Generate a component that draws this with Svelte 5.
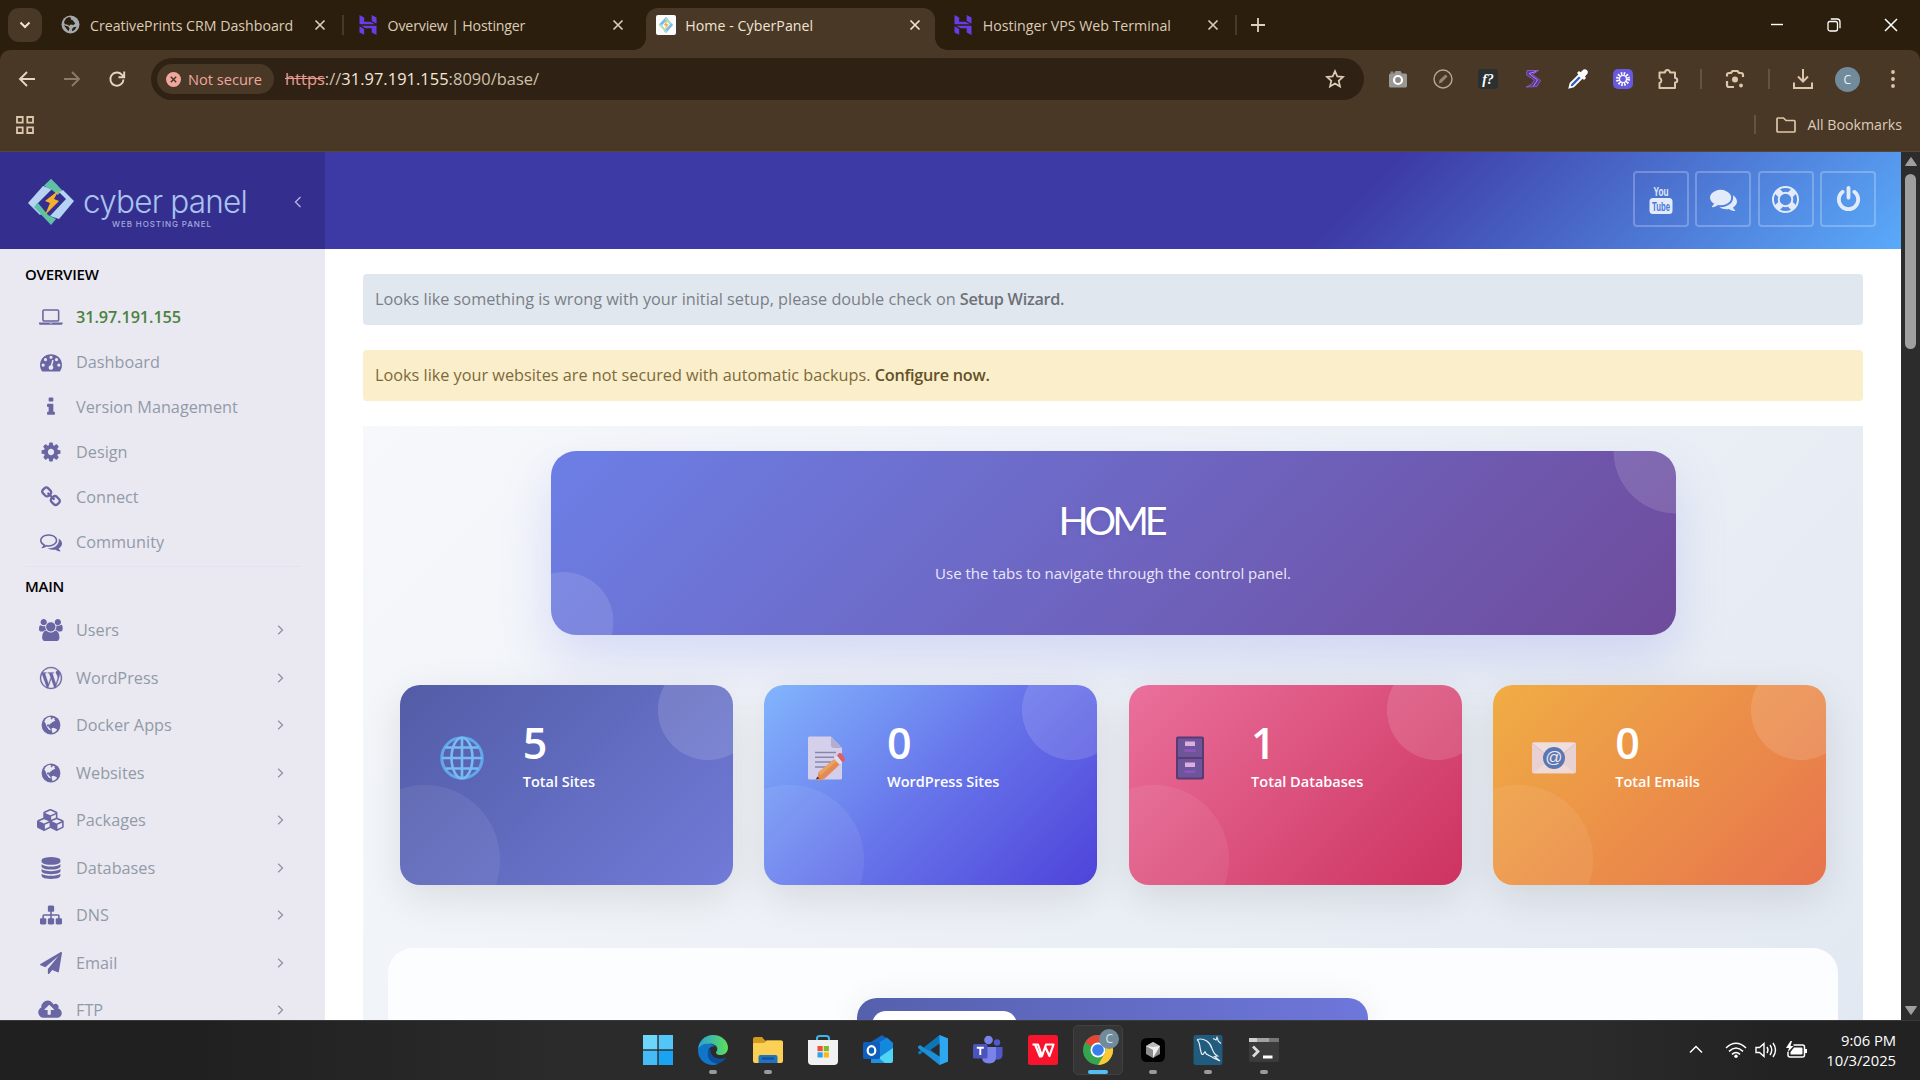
<script>
  const tabs = [
    { title: 'CreativePrints CRM Dashboard', icon: 'earth' },
    { title: 'Overview | Hostinger', icon: 'hostinger' },
    { title: 'Home - CyberPanel', icon: 'cyber', active: true },
    { title: 'Hostinger VPS Web Terminal', icon: 'hostinger' }
  ];

  const fa = {
    laptop: [1920, 'M416 1280q-66 0-113-47t-47-113v-704q0-66 47-113t113-47h1088q66 0 113 47t47 113v704q0 66-47 113t-113 47h-1088zm-32-864v704q0 13 9.5 22.5t22.5 9.5h1088q13 0 22.5-9.5t9.5-22.5v-704q0-13-9.5-22.5t-22.5-9.5h-1088q-13 0-22.5 9.5t-9.5 22.5zm1376 928h160v96q0 40-47 68t-113 28h-1600q-66 0-113-28t-47-68v-96h1760zm-720 96q16 0 16-16t-16-16h-160q-16 0-16 16t16 16h160z'],
    gauge: [1792, 'M384 1152q0-53-37.5-90.5t-90.5-37.5-90.5 37.5-37.5 90.5 37.5 90.5 90.5 37.5 90.5-37.5 37.5-90.5zm192-448q0-53-37.5-90.5t-90.5-37.5-90.5 37.5-37.5 90.5 37.5 90.5 90.5 37.5 90.5-37.5 37.5-90.5zm428 481l101-382q6-26-7.5-48.5t-38.5-29.5-48 6.5-30 39.5l-101 382q-60 5-107 43.5t-63 98.5q-20 77 20 146t117 89 146-20 89-117q16-60-6-117t-72-91zm660-33q0-53-37.5-90.5t-90.5-37.5-90.5 37.5-37.5 90.5 37.5 90.5 90.5 37.5 90.5-37.5 37.5-90.5zm-640-640q0-53-37.5-90.5t-90.5-37.5-90.5 37.5-37.5 90.5 37.5 90.5 90.5 37.5 90.5-37.5 37.5-90.5zm448 192q0-53-37.5-90.5t-90.5-37.5-90.5 37.5-37.5 90.5 37.5 90.5 90.5 37.5 90.5-37.5 37.5-90.5zm320 448q0 261-141 483-19 29-54 29h-1402q-35 0-54-29-141-221-141-483 0-182 71-348t191-286 286-191 348-71 348 71 286 191 191 286 71 348z'],
    info: [1792, 'M1216 1344v128q0 26-19 45t-45 19h-512q-26 0-45-19t-19-45v-128q0-26 19-45t45-19h64v-384h-64q-26 0-45-19t-19-45v-128q0-26 19-45t45-19h384q26 0 45 19t19 45v576h64q26 0 45 19t19 45zm-128-1152v192q0 26-19 45t-45 19h-256q-26 0-45-19t-19-45v-192q0-26 19-45t45-19h256q26 0 45 19t19 45z'],
    cog: [1792, 'M1152 896q0-106-75-181t-181-75-181 75-75 181 75 181 181 75 181-75 75-181zm512-109v222q0 12-8 23t-20 13l-185 28q-19 54-39 91 35 50 107 138 10 12 10 25t-9 23q-27 37-99 108t-94 71q-12 0-26-9l-138-108q-44 23-91 38-16 136-29 186-7 28-36 28h-222q-14 0-24.5-8.5t-11.5-21.5l-28-184q-49-16-90-37l-141 107q-10 9-25 9-14 0-25-11-126-114-165-168-7-10-7-23 0-12 8-23 15-21 51-66.5t54-70.5q-27-50-41-99l-183-27q-13-2-21-12.5t-8-23.5v-222q0-12 8-23t19-13l186-28q14-46 39-92-40-57-107-138-10-12-10-24 0-10 9-23 26-36 98.5-107.5t94.5-71.5q13 0 26 10l138 107q44-23 91-38 16-136 29-186 7-28 36-28h222q14 0 24.5 8.5t11.5 21.5l28 184q49 16 90 37l142-107q9-9 24-9 13 0 25 10 129 119 165 170 7 8 7 22 0 12-8 23-15 21-51 66.5t-54 70.5q26 50 41 98l183 28q13 2 21 12.5t8 23.5z'],
    link: [1792, 'M1520 1216q0-40-28-68l-208-208q-28-28-68-28-42 0-72 32 3 3 19 18.5t21.5 21.5 15 19 13 25.5 3.5 27.5q0 40-28 68t-68 28q-15 0-27.5-3.5t-25.5-13-19-15-21.5-21.5-18.5-19q-33 31-33 73 0 40 28 68l206 207q27 27 68 27 40 0 68-26l147-146q28-28 28-67zm-703-705q0-40-28-68l-206-207q-28-28-68-28-39 0-68 27l-147 146q-28 28-28 67 0 40 28 68l208 208q27 27 68 27 42 0 72-31-3-3-19-18.5t-21.5-21.5-15-19-13-25.5-3.5-27.5q0-40 28-68t68-28q15 0 27.5 3.5t25.5 13 19 15 21.5 21.5 18.5 19q33-31 33-73zm895 705q0 120-85 203l-147 146q-83 83-203 83-121 0-204-85l-206-207q-83-83-83-203 0-123 88-209l-88-88q-86 88-208 88-120 0-204-84l-208-208q-84-84-84-204t85-203l147-146q83-83 203-83 121 0 204 85l206 207q83 83 83 203 0 123-88 209l88 88q86-88 208-88 120 0 204 84l208 208q84 84 84 204z'],
    comments: [1792, 'M1408 768q0 139-94 257t-256.5 186.5-353.5 68.5q-86 0-176-16-124 88-278 128-36 9-86 16h-3q-11 0-20.5-8t-11.5-21q-1-3-1-6.5t.5-6.5 2-6l2.5-5 3.5-5.5 4-5 4.5-5 4-4.5q5-6 23-25t26-29.5 22.5-29 25-38.5 20.5-44q-124-72-195-177t-71-224q0-139 94-257t256.5-186.5 353.5-68.5 353.5 68.5 256.5 186.5 94 257zm384 256q0 120-71 224.5t-195 176.5q10 24 20.5 44t25 38.5 22.5 29 26 29.5 23 25q1 1 4 4.5t4.5 5 4 5 3.5 5.5l2.5 5 2 6 .5 6.5-1 6.5q-3 14-13 22t-22 7q-50-7-86-16-154-40-278-128-90 16-176 16-271 0-472-132 58 4 88 4 161 0 309-45t264-129q125-92 192-212t67-254q0-77-23-152 129 71 204 178t75 230z'],
    commentsOutline: [1792, 'M704 384q-153 0-286 52t-211.5 141-78.5 191q0 82 53 158t149 132l97 56-35 84q34-20 62-39l44-31 53 10q78 14 153 14 153 0 286-52t211.5-141 78.5-191-78.5-191-211.5-141-286-52zm0-128q191 0 353.5 68.5t256.5 186.5 94 257-94 257-256.5 186.5-353.5 68.5q-86 0-176-16-124 88-278 128-36 9-86 16h-3q-11 0-20.5-8t-11.5-21q-1-3-1-6.5t.5-6.5 2-6l2.5-5 3.5-5.5 4-5 4.5-5 4-4.5q5-6 23-25t26-29.5 22.5-29 25-38.5 20.5-44q-124-72-195-177t-71-224q0-139 94-257t256.5-186.5 353.5-68.5zm822 1169q10 24 20.5 44t25 38.5 22.5 29 26 29.5 23 25q1 1 4 4.5t4.5 5 4 5 3.5 5.5l2.5 5 2 6 .5 6.5-1 6.5q-3 14-13 22t-22 7q-50-7-86-16-154-40-278-128-90 16-176 16-271 0-472-132 58 4 88 4 161 0 309-45t264-129q125-92 192-212t67-254q0-77-23-152 129 71 204 178t75 230q0 120-71 224.5t-195 176.5z'],
    users: [1920, 'M593 896q-162 5-265 128h-134q-82 0-138-40.5t-56-118.5q0-353 124-353 6 0 43.5 21t97.5 42.5 119 21.5q67 0 133-23-5 37-5 66 0 159 93 293zm1071 637q0 120-73 189.5t-194 69.5h-874q-121 0-194-69.5t-73-189.5q0-53 3.5-103.5t14-109 26.5-108.5 43-97.5 62-81 85.5-53.5 111.5-20q10 0 43 21.5t73 48 107 48 135 21.5 135-21.5 107-48 73-48 43-21.5q61 0 111.5 20t85.5 53.5 62 81 43 97.5 26.5 108.5 14 109 3.5 103.5zm-1024-1277q0 106-75 181t-181 75-181-75-75-181 75-181 181-75 181 75 75 181zm704 384q0 159-112.5 271.5t-271.5 112.5-271.5-112.5-112.5-271.5 112.5-271.5 271.5-112.5 271.5 112.5 112.5 271.5zm576 225q0 78-56 118.5t-138 40.5h-134q-103-123-265-128 93-134 93-293 0-29-5-66 66 23 133 23 59 0 119-21.5t97.5-42.5 43.5-21q124 0 124 353zm-128-609q0 106-75 181t-181 75-181-75-75-181 75-181 181-75 181 75 75 181z'],
    database: [1792, 'M896 768q237 0 443-43t325-127v170q0 69-103 128t-280 93.5-385 34.5-385-34.5-280-93.5-103-128v-170q119 84 325 127t443 43zm0 768q237 0 443-43t325-127v170q0 69-103 128t-280 93.5-385 34.5-385-34.5-280-93.5-103-128v-170q119 84 325 127t443 43zm0-384q237 0 443-43t325-127v170q0 69-103 128t-280 93.5-385 34.5-385-34.5-280-93.5-103-128v-170q119 84 325 127t443 43zm0-1152q208 0 385 34.5t280 93.5 103 128v128q0 69-103 128t-280 93.5-385 34.5-385-34.5-280-93.5-103-128v-128q0-69 103-128t280-93.5 385-34.5z'],
    sitemap: [1792, 'M1792 1248v320q0 40-28 68t-68 28h-320q-40 0-68-28t-28-68v-320q0-40 28-68t68-28h96v-192h-512v192h96q40 0 68 28t28 68v320q0 40-28 68t-68 28h-320q-40 0-68-28t-28-68v-320q0-40 28-68t68-28h96v-192h-512v192h96q40 0 68 28t28 68v320q0 40-28 68t-68 28h-320q-40 0-68-28t-28-68v-320q0-40 28-68t68-28h96v-192q0-52 38-90t90-38h512v-192h-96q-40 0-68-28t-28-68v-320q0-40 28-68t68-28h320q40 0 68 28t28 68v320q0 40-28 68t-68 28h-96v192h512q52 0 90 38t38 90v192h96q40 0 68 28t28 68z'],
    plane: [1792, 'M1764 11q33 24 27 64l-256 1536q-5 29-32 45-14 8-31 8-11 0-24-5l-453-185-242 295q-18 23-49 23-13 0-22-4-19-7-30.5-23.5t-11.5-36.5v-349l864-1059-1069 925-395-162q-37-14-40-55-2-40 32-59l1664-960q15-9 32-9 20 0 36 11z'],
    cloud: [1920, 'M1216 864q0-14-9-23l-352-352q-9-9-23-9t-23 9l-351 351q-10 12-10 24 0 14 9 23t23 9h224v352q0 13 9.5 22.5t22.5 9.5h192q13 0 22.5-9.5t9.5-22.5v-352h224q13 0 22.5-9.5t9.5-22.5zm640 288q0 159-112.5 271.5t-271.5 112.5h-1088q-185 0-316.5-131.5t-131.5-316.5q0-130 70-240t188-165q-2-30-2-43 0-212 150-362t362-150q156 0 285.5 87t188.5 231q71-62 166-62 106 0 181 75t75 181q0 76-41 138 130 31 213.5 135.5t83.5 238.5z'],
    ring: [1792, 'M896 0q182 0 348 71t286 191 191 286 71 348-71 348-191 286-286 191-348 71-348-71-286-191-191-286-71-348 71-348 191-286 286-191 348-71zm0 128q-190 0-361 90l194 194q82-28 167-28t167 28l194-194q-171-90-361-90zm-678 1129l194-194q-28-82-28-167t28-167l-194-194q-90 171-90 361t90 361zm678 407q190 0 361-90l-194-194q-82 28-167 28t-167-28l-194 194q171 90 361 90zm0-384q159 0 271.5-112.5t112.5-271.5-112.5-271.5-271.5-112.5-271.5 112.5-112.5 271.5 112.5 271.5 271.5 112.5zm484-217l194 194q90-171 90-361t-90-361l-194 194q28 82 28 167t-28 167z'],
    power: [1792, 'M1664 896q0 156-61 298t-164 245-245 164-298 61-298-61-245-164-164-245-61-298q0-182 80.5-343t226.5-270q43-32 95.5-25t83.5 50q32 42 24.5 94.5t-49.5 84.5q-98 74-151.5 181t-53.5 228q0 104 40.5 198.5t109.5 163.5 163.5 109.5 198.5 40.5 198.5-40.5 163.5-109.5 109.5-163.5 40.5-198.5q0-121-53.5-228t-151.5-181q-42-32-49.5-84.5t24.5-94.5q31-43 84-50t95 25q146 109 226.5 270t80.5 343zm-640-768v640q0 52-38 90t-90 38-90-38-38-90v-640q0-52 38-90t90-38 90 38 38 90z'],
    cubes: [2304, 'M640 1632l384-192v-314l-384 164v342zm-64-454l404-173-404-173-404 173zm1088 454l384-192v-314l-384 164v342zm-64-454l404-173-404-173-404 173zm-448-293l384-165v-266l-384 164v267zm-64-379l441-189-441-189-441 189zm1088 518v416q0 36-19 67t-52 47l-448 224q-25 14-57 14t-57-14l-448-224q-4-2-7-4-2 2-7 4l-448 224q-25 14-57 14t-57-14l-448-224q-33-16-52-47t-19-67v-416q0-38 21.5-70t56.5-48l434-186v-400q0-38 21.5-70t56.5-48l448-192q23-10 50-10t50 10l448 192q35 16 56.5 48t21.5 70v400l434 186q36 16 57 48t21 70z']
  };

  const wordpress = 'M21.469 6.825c.84 1.537 1.318 3.3 1.318 5.175 0 3.979-2.156 7.456-5.363 9.325l3.295-9.527c.615-1.54.82-2.771.82-3.864 0-.405-.026-.78-.07-1.11m-7.981.105c.647-.03 1.232-.105 1.232-.105.582-.075.514-.93-.067-.899 0 0-1.755.135-2.88.135-1.064 0-2.85-.15-2.85-.15-.585-.03-.661.855-.075.885 0 0 .54.061 1.125.09l1.68 4.605-2.37 7.08L5.354 6.9c.649-.03 1.234-.1 1.234-.1.585-.075.516-.93-.065-.896 0 0-1.746.138-2.874.138-.2 0-.438-.008-.69-.015C4.911 3.15 8.235 1.215 12 1.215c2.809 0 5.365 1.072 7.286 2.833-.046-.003-.091-.009-.141-.009-1.06 0-1.812.923-1.812 1.914 0 .89.513 1.643 1.06 2.531.411.72.89 1.643.89 2.977 0 .915-.354 1.994-.821 3.479l-1.075 3.585-3.9-11.61.001.014zM12 22.784c-1.059 0-2.081-.153-3.048-.437l3.237-9.406 3.315 9.087c.024.053.05.101.078.149-1.12.393-2.325.609-3.582.609M1.211 12c0-1.564.336-3.05.935-4.39L7.29 21.709C3.694 19.96 1.212 16.271 1.211 12M12 0C5.385 0 0 5.385 0 12s5.385 12 12 12 12-5.385 12-12S18.615 0 12 0';
  const hostinger = 'M16.415 0v7.16l5.785 3.384V2.949L16.415 0ZM1.8 0v11.237h18.815L14.89 8.09l-7.457-.003V3.024L1.8 0Zm14.615 20.894v-5.019l-7.514-.005c.007.033-5.82-3.197-5.82-3.197l19.119.091V24l-5.785-3.106ZM1.8 13.551v7.343l5.633 2.949v-6.988L1.8 13.551Z';

  const overview = [
    ['laptop', '31.97.191.155', true],
    ['gauge', 'Dashboard'],
    ['info', 'Version Management'],
    ['cog', 'Design'],
    ['link', 'Connect'],
    ['commentsOutline', 'Community']
  ];
  const main = [
    ['users', 'Users'],
    ['wordpress', 'WordPress'],
    ['globe', 'Docker Apps'],
    ['globe', 'Websites'],
    ['cubes', 'Packages'],
    ['database', 'Databases'],
    ['sitemap', 'DNS'],
    ['plane', 'Email'],
    ['cloud', 'FTP']
  ];
  const stats = [
    { tone: 'indigo', icon: 'web', value: 5, label: 'Total Sites' },
    { tone: 'blue', icon: 'memo', value: 0, label: 'WordPress Sites' },
    { tone: 'pink', icon: 'cabinet', value: 1, label: 'Total Databases' },
    { tone: 'orange', icon: 'mail', value: 0, label: 'Total Emails' }
  ];
  const apps = [
    ['windows', ''], ['edge', 'dot'], ['files', 'dot'], ['store', ''], ['outlook', ''], ['vscode', ''],
    ['teams', ''], ['wps', ''], ['chrome', 'bar'], ['cursor', 'dot'], ['mysql', 'dot'], ['terminal', 'dot']
  ];
</script>

{#snippet faIcon(name, size)}
  {#if name === 'wordpress'}
    <svg class="fa" height={size} viewBox="0 0 24 24"><path d={wordpress} stroke="currentColor" stroke-width=".3" /></svg>
  {:else if name === 'globe'}
    <svg class="fa" height={size} viewBox="0 0 24 24">
      <circle cx="12" cy="12" r="10.3" />
      <path class="land" d="M8.3 3.9 10.8 3l1.5 1.2-.8 1.4 1.8.2.6-1.6 2.2.4-.4 1.4 1 1-1.7 1.3-1.6.3-1 1.5-1.6.5-.4 1.4-1.4-.8-1.7.9.5 1.6 1.4-.3.5 1.5 1 .2.2 1.5 1.5.2-.6.8-2.1-.5L6.9 13l-1-3.3-1.2-1.2 1-2.4z" />
      <path class="land" d="M12.7 15.500l2.300-.6 1.600.8 1.900 1-.6 1.500-1.900 1.600-2.500 1-.6-2.200z" />
    </svg>
  {:else}
    <svg class="fa" height={size} viewBox="0 0 {fa[name][0]} 1792"><path d={fa[name][1]} /></svg>
  {/if}
{/snippet}

{#snippet cross()}
  <svg width="12" height="12" viewBox="0 0 12 12"><path d="M1.5 1.5l9 9m0-9l-9 9" stroke="currentColor" stroke-width="1.7" fill="none" /></svg>
{/snippet}

{#snippet favicon(name)}
  {#if name === 'earth'}
    <svg width="19" height="19" viewBox="0 0 19 19">
      <circle cx="9.5" cy="9.5" r="9" fill="#a4a9ae" />
      <path d="M5 3.5l3-1.500 2 .7-.3 1.800 1.800.6 2.700 3.400-1.700 1.400-3-.3-1 1.200-2.500-1.200-2.200-.3-.8-2.300zM2.8 10.300l4.500 1.200 1.200 2-1 2.700zM12.5 12.300l3-.6-1.500 2.800-2.500 1.700-.8-1.700z" fill="#2b1e0d" />
    </svg>
  {:else if name === 'hostinger'}
    <svg width="18" height="20" viewBox="1.2 0 21.600 24" fill="#673de6"><path d={hostinger} /></svg>
  {:else}
    <svg width="20" height="20" viewBox="0 0 20 20">
      <rect width="20" height="20" rx="2" fill="#fbfcfb" />
      <path d="M10 2 3 9.500l2 2L12 4z" fill="#78b9e6" /><path d="M10 2l7 7.500-2 1.500-6-6.500z" fill="#a9dcc9" />
      <path d="M10 18l7-8-2-1.500-7 7.500z" fill="#78b9e6" /><path d="M10 18l-7-8 2-1 6 7z" fill="#a9dcc9" />
      <path d="M11.500 5 7.800 10l2.300.5-1.200 4 3.700-5-2.300-.6z" fill="#f2ab35" />
    </svg>
  {/if}
{/snippet}

{#snippet emoji(name)}
  {#if name === 'web'}
    <svg width="44" height="44" viewBox="0 0 44 44" fill="none" stroke="#79c3f7" stroke-width="2.6">
      <circle cx="22" cy="22" r="20.2" stroke="#64adf0" stroke-width="3" /><ellipse cx="22" cy="22" rx="10.5" ry="20.200" />
      <path d="M22 2v40M2 22h40M5.500 11.500h33M5.500 32.500h33" />
    </svg>
  {:else if name === 'memo'}
    <svg width="44" height="44" viewBox="0 0 44 44">
      <path d="M4 2q0-1.500 1.500-1.500H27L38 12v30q0 1.500-1.500 1.500h-31Q4 43.500 4 42z" fill="#ddd4ea" />
      <path d="M27 .500V9q0 3 3 3h8z" fill="#b9afcd" />
      <path d="M11 16.500h21M11 21.300h19M11 26h16M11 31h12" stroke="#8c86a6" stroke-width="1.6" />
      <path d="M14 35 31.500 24.500l5 6L19.500 42l-7.500 1.500z" fill="#ed8b45" transform="rotate(-9 24 34)" />
      <path d="M14 35l17.500-10.500 2 2.500L16 38z" fill="#f5a552" transform="rotate(-9 24 34)" />
      <path d="M30 21.500l3-2 5.500 7-3 2z" fill="#e9e4f3" /><path d="M33 19.500l1.800-2.200q1.800-1 3 .5l3 4.200q1 2-.8 3.200l-1.500 1.300z" fill="#e25c58" />
      <path d="M12 43.500l1.200-3 2.300 2z" fill="#382a36" />
    </svg>
  {:else if name === 'cabinet'}
    <svg width="44" height="44" viewBox="0 0 44 44">
      <rect x="8" y=".5" width="28" height="43" rx="2" fill="#4e3771" />
      <rect x="10" y="2.5" width="24" height="18.5" rx="1" fill="#65549c" /><rect x="10" y="23" width="24" height="18.5" rx="1" fill="#65549c" />
      <path d="M17 5.500h10V10H17zM17 26.500h10V31H17z" fill="#dcb6e8" /><path d="M16.500 13.500h11v2.200h-11zM16.500 34.500h11v2.200h-11z" fill="#8a55c8" />
    </svg>
  {:else}
    <svg width="44" height="44" viewBox="0 0 44 44">
      <rect y="6.5" width="44" height="31" rx="2" fill="#e9d5df" />
      <path d="M1 37 22 21l21 16z" fill="#f2dfe3" /><path d="M0 8 19 23q3 2 6 0L44 8q-.5-1.500-2-1.500H2Q.5 6.500 0 8z" fill="#f1e4ec" />
      <path d="M1 8l18 14.500q3 2 6 0L43 8" fill="none" stroke="#d9bfd0" stroke-width="1" />
      <circle cx="22" cy="22" r="11" fill="#4c74bd" />
      <text x="22" y="27" class="at">@</text>
    </svg>
  {/if}
{/snippet}

{#snippet app(name)}
  <svg width="30" height="30" viewBox="0 0 30 30">
    {#if name === 'windows'}
      <path d="M0 0h14.300v14.300H0z" fill="#6fd6fb" /><path d="M15.700 0H30v14.300H15.700z" fill="#53c5f9" /><path d="M0 15.700h14.300V30H0z" fill="#45bcf7" /><path d="M15.700 15.700H30V30H15.700z" fill="#1ba3f3" />
    {:else if name === 'edge'}
      <defs><linearGradient id="eg" x1="0" x2="1"><stop stop-color="#2a9fdf" /><stop offset="1" stop-color="#5ddf57" /></linearGradient></defs>
      <path d="M0 15.500C0 6.500 6.500 0 15 0c9 0 15 6.300 15 12.500 0 5-3.500 7.500-7.500 7.500-3.800 0-4.500-1.800-4.500-2.500 0-1 1.300-1.200 1.300-3.500 0-3-3-5.300-7-5.300C6 8.700 1 11.500 0 15.500z" fill="url(#eg)" />
      <path d="M0 15.500C1 10.500 6 8.700 10.500 8.700c3.500 0 6 1.500 7.500 3-5-1.500-8 2.300-8 6.300 0 6 5 10.800 10.500 10.500-1.500 1-4 1.500-5.500 1.500C6 30 0 23.500 0 15.500z" fill="#1276c8" />
      <path d="M10.500 15c-3 8 3 14 10.500 13.300 3.500-1.200 6.500-4 7.300-6-8 4-16.500-.300-15.800-8z" fill="#0b4fa0" />
    {:else if name === 'files'}
      <path d="M0 4q0-2 2-2h7l3 3.500h16q2 0 2 2V12H0z" fill="#d29a1e" /><path d="M0 9q0-1 1-1h10l3-2.500h14q2 0 2 2V26q0 2-2 2H2q-2 0-2-2z" fill="#fbd155" />
      <path d="M5.500 28v-6q0-2 2-2h15q2 0 2 2v6z" fill="#2273bf" /><path d="M9 23.500h12" stroke="#114f91" stroke-width="2" />
    {:else if name === 'store'}
      <path d="M9 7V3.500Q9 1 11.500 1h7Q21 1 21 3.500V7" fill="none" stroke="#3cb5e6" stroke-width="2" /><path d="M0 5h30v21q0 4-4 4H4q-4 0-4-4z" fill="#f1f1f3" />
      <path d="M9.500 11h5.200v5.200H9.500z" fill="#ee5130" /><path d="M15.700 11h5.200v5.200h-5.200z" fill="#7fbb25" /><path d="M9.500 17.300h5.200v5.200H9.500z" fill="#2ba3ea" /><path d="M15.700 17.300h5.200v5.200h-5.200z" fill="#fbb818" />
    {:else if name === 'outlook'}
      <path d="M8 7 19 0l11 8v14l-8 6H8z" fill="#1164c0" /><path d="M12 10 24 2.500 30 8v8L16 22z" fill="#1488dc" /><path d="M8 28 30 13v13q0 2-2 2z" fill="#4fd5f5" /><path d="M8 17l14 11H8z" fill="#1f8fe0" />
      <rect y="7" width="17" height="17" rx="1.5" fill="#0d5ebd" /><ellipse cx="8.5" cy="15.5" rx="3.8" ry="4.4" fill="none" stroke="#fff" stroke-width="2.2" />
    {:else if name === 'vscode'}
      <path d="M21.500 0 30 3.500v23L21.500 30 6 16l-4 3.500L0 18.500V17z" fill="#0d75b8" /><path d="M21.500 30 0 13v-1.500L2 10l5 3.500 14.500 7.800z" fill="#1d8fd6" /><path d="M21.500 0 30 3.500v23L21.500 30z" fill="#2fa7ee" /><path d="M21.500 8.500v13L12.500 15z" fill="#2b2b2b" />
    {:else if name === 'teams'}
      <circle cx="24" cy="7.5" r="3.2" fill="#5059c9" /><circle cx="15.5" cy="5" r="4.3" fill="#7b83eb" /><path d="M21 12h8.500v7.500q0 5-5 5H21z" fill="#5059c9" /><path d="M9 12h14v10q0 6.500-7 6.500T9 22z" fill="#7b83eb" />
      <rect y="9" width="14.5" height="14.5" rx="1.5" fill="#4b53bc" /><path d="M3.800 12.800h7M7.300 12.800V20" stroke="#fff" stroke-width="1.9" />
    {:else if name === 'wps'}
      <rect width="30" height="30" rx="2.5" fill="#f8142d" /><path d="M4.500 9.500h5.500l4 11.500L18 9.500h7.500L21.500 21 17.500 12.500M7 9.500l5 12h2" fill="none" stroke="#fff" stroke-width="2.2" stroke-linejoin="round" />
    {:else if name === 'chrome'}
      <circle cx="15" cy="15" r="15" fill="#35a550" /><path d="M15 0a15 15 0 0 1 13 7.500H15A7.500 7.500 0 0 0 8.500 11.300L2 7.500A15 15 0 0 1 15 0z" fill="#e94434" /><path d="M28 7.500A15 15 0 0 1 15 30l6.500-11.300A7.500 7.500 0 0 0 20.500 9.500L19 7.500z" fill="#fcc934" />
      <circle cx="15" cy="15" r="7.5" fill="#fff" /><circle cx="15" cy="15" r="5.8" fill="#3a7ded" />
    {:else if name === 'cursor'}
      <rect x="3" y="3" width="24" height="24" rx="5.5" fill="#020202" /><path d="M15 7l7 4v8l-7 4-7-4v-8z" fill="#8d8d8d" /><path d="M8 11h14l-7 12v-8z" fill="#f0f0f0" /><path d="M8 11l7-4 7 4-7 1z" fill="#bbb" />
    {:else if name === 'mysql'}
      <rect x=".5" width="29" height="30" rx="2.5" fill="#215b7d" /><path d="M4 4.500c7-2 13 2.500 15 9 1.500 4.500 3.500 6.500 5.500 7.500l-3 .5 5.500 4.500-6.500-3C18 21 16 21 14.500 19.500c-.5 0-2-1.500-2.500-3M4 4.500c3 2 2.500 7 3.500 10.500 1 4 1 4.500 2.500 4.500l2-3M20 3.500l3 1.500 1-2.500 1.500 4 2.500 2" fill="none" stroke="#e6eef2" stroke-width="1.2" />
    {:else}
      <rect y="3" width="30" height="24" rx="1.5" fill="#3b3b3b" /><path d="M0 3h8v4H0z" fill="#d0d0d0" /><path d="M8 3h12v4H8z" fill="#a2a2a2" /><path d="M20 3h10v4H20z" fill="#767676" /><path d="M4 11.500l5 5-5 5" fill="none" stroke="#dcdcdc" stroke-width="2.8" /><path d="M14 22h9.500" stroke="#fff" stroke-width="3" />
    {/if}
  </svg>
{/snippet}

<div class="screen">
  <header class="browser">
    <div class="tabstrip">
      <div class="tabsearch">
        <svg width="12" height="8" viewBox="0 0 12 8"><path d="M1.5 1.5 6 6l4.500-4.500" fill="none" stroke="#f2e5d4" stroke-width="2" /></svg>
      </div>
      {#each tabs as tab, i}
        <div class="tab" class:active={tab.active} class:ruled={i === 0 || i === 3}>
          <span class="fav">{@render favicon(tab.icon)}</span>
          <span class="title t{i}">{tab.title}</span>
          <span class="close">{@render cross()}</span>
        </div>
      {/each}
      <svg class="plus" width="14" height="14" viewBox="0 0 14 14"><path d="M7 0v14M0 7h14" stroke="#e0cfb9" stroke-width="1.8" /></svg>
      <div class="winctl">
        <svg width="14" height="14" viewBox="0 0 14 14"><path d="M1 6.500h12" stroke="#fff" stroke-width="1.4" /></svg>
        <svg width="14" height="14" viewBox="0 0 14 14" fill="none" stroke="#fff" stroke-width="1.3"><rect x="1" y="3.5" width="9.5" height="9.5" rx="2" /><path d="M3.800 1h6.200q3 0 3 3v6.200" /></svg>
        <svg width="14" height="14" viewBox="0 0 14 14"><path d="M1 1l12 12M13 1 1 13" stroke="#fff" stroke-width="1.5" /></svg>
      </div>
    </div>

    <div class="toolbar">
      <div class="nav">
        <svg width="18" height="18" viewBox="0 0 18 18"><path d="M17 9H2.500M9 2 2 9l7 7" fill="none" stroke="#e5d5c1" stroke-width="1.9" /></svg>
        <svg width="18" height="18" viewBox="0 0 18 18"><path d="M1 9h14.500M9 2l7 7-7 7" fill="none" stroke="#8b7a66" stroke-width="1.9" /></svg>
        <svg width="18" height="18" viewBox="0 0 18 18"><path d="M15.500 9.500A6.600 6.600 0 1 1 13.800 4.700L16 6.800M16.200 1.500v5.700h-5.700" fill="none" stroke="#e5d5c1" stroke-width="1.9" /></svg>
      </div>
      <div class="omnibox">
        <div class="chip">
          <svg width="15" height="15" viewBox="0 0 15 15"><circle cx="7.5" cy="7.5" r="7.5" fill="#efa79e" /><path d="M4.800 4.800l5.400 5.400m0-5.400-5.400 5.400" stroke="#493826" stroke-width="1.5" /></svg>
          <span>Not secure</span>
        </div>
        <div class="url"><s>https</s><span class="dim">://</span>31.97.191.155<span class="dim">:8090/base/</span></div>
        <svg width="20" height="20" viewBox="0 0 20 20"><path d="M10 2.200l2.300 5.200 5.700.6-4.300 3.800 1.300 5.600-5-3-5 3 1.300-5.600L2 8l5.700-.6z" fill="none" stroke="#ddccb7" stroke-width="1.7" /></svg>
      </div>
      <div class="extensions">
        <svg width="20" height="20" viewBox="0 0 20 20"><path d="M1 6q0-1.500 1.500-1.500H6L7.500 2h5L14 4.500h3.500Q19 4.500 19 6v11q0 1.500-1.500 1.500h-15Q1 18.500 1 17z" fill="#9a9895" /><path d="M2.500 2.500h3V5h-3z" fill="#8b8884" /><circle cx="10" cy="11" r="4" fill="#8b8986" stroke="#fff" stroke-width="2.2" /></svg>
        <svg width="20" height="20" viewBox="0 0 20 20"><circle cx="10" cy="10" r="9" fill="none" stroke="#b7a897" stroke-width="1.4" /><path d="M6 14.500 6.500 11l6-5.500 2 2-5.800 6z" fill="#948676" /></svg>
        <svg width="20" height="20" viewBox="0 0 20 20"><rect width="20" height="20" rx="3" fill="#2d3031" /><text x="10" y="15" class="fq">f?</text></svg>
        <svg width="20" height="20" viewBox="0 0 20 20"><path d="M15.500 1.500H4L3.500 6l8 5-3 4.500-5.500 2.500 11-.5 3.500-6-8-6z" fill="#5a3596" stroke="#8757c6" stroke-width="1" /><path d="M13 2.500 6 4.500l8.500 6.500L10.500 17" fill="none" stroke="#b695e4" stroke-width=".9" /></svg>
        <svg width="20" height="20" viewBox="0 0 20 20"><path d="M1.500 18.500l1-4L11 6l3 3-8.500 8.500z" fill="#315cc0" stroke="#fff" stroke-width="1.8" /><path d="M9 4l2-2 1.500 1.200L15.500.500q2-.8 3.500.8t.6 3.200L17 7.500 18 9l-2 2z" fill="#fff" /></svg>
        <svg width="20" height="20" viewBox="0 0 20 20"><rect width="20" height="20" rx="5" fill="#675ade" /><circle cx="10" cy="10" r="5" fill="none" stroke="#fff" stroke-width="4" stroke-dasharray="1.400 1.218" /><circle cx="10" cy="10" r="3.5" fill="none" stroke="#fff" stroke-width="1.2" /></svg>
        <svg width="22" height="22" viewBox="0 0 22 22"><path d="M2.500 4.500H8a2.500 2.500 0 0 1 5 0h5V10a2.200 2.200 0 0 1 0 4.500V20H2.500v-5a2.600 2.600 0 0 0 0-5z" fill="none" stroke="#ddc6ab" stroke-width="2" stroke-linejoin="round" /></svg>
        <i class="bar"></i>
        <svg width="20" height="20" viewBox="0 0 20 20" fill="none" stroke="#ddc6ab" stroke-width="2.2"><path d="M2 7.500V6q0-2 2-2h2l1.500-2h5L14 4h2q2 0 2 2v2M2 12v4q0 2 2 2h5" /><circle cx="10" cy="10.5" r="3" fill="#ddc6ab" stroke="none" /><circle cx="16" cy="16.5" r="1.9" fill="#ddc6ab" stroke="none" /></svg>
        <i class="bar"></i>
        <svg width="22" height="22" viewBox="0 0 22 22"><path d="M11 1v12M6 8.500l5 5 5-5M2 14.500V20h18v-5.500" fill="none" stroke="#ddc6ab" stroke-width="2" /></svg>
        <span class="avatar">C</span>
        <svg width="6" height="20" viewBox="0 0 6 20" fill="#ddc6ab"><circle cx="3" cy="3" r="1.9" /><circle cx="3" cy="10" r="1.9" /><circle cx="3" cy="17" r="1.9" /></svg>
      </div>
    </div>

    <div class="bookmarks">
      <svg width="18" height="18" viewBox="0 0 18 18" fill="none" stroke="#ddc6ab" stroke-width="1.8"><path d="M1 1h5.700v5.700H1zM11.300 1H17v5.700h-5.700zM1 11.300h5.700V17H1zM11.300 11.300H17V17h-5.700z" /></svg>
      <i class="bar"></i>
      <svg width="20" height="16" viewBox="0 0 20 16"><path d="M1 2q0-1 1-1h5.500L10 3.500h8q1 0 1 1V14q0 1-1 1H2q-1 0-1-1z" fill="none" stroke="#ddc6ab" stroke-width="1.7" /></svg>
      <span>All Bookmarks</span>
    </div>
  </header>

  <div class="page">
    <aside class="sidebar">
      <div class="brand">
        <svg width="46" height="46" viewBox="0 0 46 46">
          <path d="M0 24 15 7l9 3L8 26l7 8-3 2z" fill="#b7d3f3" /><path d="M23 0l7 7-8 3.500-6-4z" fill="#5fc1a4" /><path d="M23 0 34 11l-4 5-12-10z" fill="#5fc1a4" />
          <path d="M46 22 31 40l-9-3 16-17-7-7 4-2z" fill="#b7d3f3" /><path d="M23 46 6 28l4-4 10 12 8 4z" fill="#5fc1a4" />
          <path d="M31 11 17 22l5 2-5 12 14-14-5-2z" fill="#f7b02c" />
        </svg>
        <div class="wordmark"><b>cyber panel</b><small>WEB HOSTING PANEL</small></div>
        <svg class="fold" width="8" height="12" viewBox="0 0 8 12"><path d="M6.500 1 1.500 6l5 5" fill="none" stroke="#b5b3dd" stroke-width="1.4" /></svg>
      </div>
      <h2>OVERVIEW</h2>
      <nav class="short">
        {#each overview as [icon, label, strong]}
          <a class:strong><span class="ico">{@render faIcon(icon, 22)}</span>{label}</a>
        {/each}
      </nav>
      <hr />
      <h2 class="second">MAIN</h2>
      <nav class="tall">
        {#each main as [icon, label]}
          <a><span class="ico">{@render faIcon(icon, 22)}</span>{label}
            <svg class="more" width="7" height="10" viewBox="0 0 7 10"><path d="M1.200.8 5.500 5 1.200 9.200" fill="none" stroke="#8d94a6" stroke-width="1.3" /></svg>
          </a>
        {/each}
      </nav>
    </aside>

    <main>
      <div class="topbar">
        <button aria-label="YouTube">
          <svg width="24" height="30" viewBox="0 0 24 30"><text x="12" y="11" class="you" textLength="15" lengthAdjust="spacingAndGlyphs">You</text><rect x=".5" y="13" width="23" height="16" rx="3.5" fill="#e3ebfb" /><text x="12" y="26" class="tube" textLength="18" lengthAdjust="spacingAndGlyphs">Tube</text></svg>
        </button>
        <button aria-label="Community chat">{@render faIcon('comments', 27)}</button>
        <button aria-label="Support">{@render faIcon('ring', 27)}</button>
        <button aria-label="Log out">{@render faIcon('power', 27)}</button>
      </div>

      <div class="alert info">Looks like something is wrong with your initial setup, please double check on <b>Setup Wizard.</b></div>
      <div class="alert warn">Looks like your websites are not secured with automatic backups. <b>Configure now.</b></div>

      <section class="panel">
        <div class="hero">
          <h1>HOME</h1>
          <p>Use the tabs to navigate through the control panel.</p>
        </div>
        <div class="stats">
          {#each stats as s}
            <div class="card {s.tone}">
              <span class="pic">{@render emoji(s.icon)}</span>
              <div class="figure"><strong>{s.value}</strong><span>{s.label}</span></div>
            </div>
          {/each}
        </div>
        <div class="sheet">
          <div class="switch"><div class="knob"></div></div>
        </div>
      </section>
    </main>

    <div class="scrollbar">
      <svg width="12" height="9" viewBox="0 0 12 9"><path d="M6 .500 11.500 8.500H.500z" fill="#9f9f9f" stroke="#9f9f9f" stroke-linejoin="round" /></svg>
      <div class="thumb"></div>
      <svg width="12" height="9" viewBox="0 0 12 9"><path d="M6 8.500 11.500.500H.500z" fill="#9f9f9f" stroke="#9f9f9f" stroke-linejoin="round" /></svg>
    </div>
  </div>

  <footer class="taskbar">
    <div class="apps">
      {#each apps as [name, state]}
        <div class="app {name} {state}">
          {@render app(name)}
          {#if name === 'chrome'}<span class="badge">C</span>{/if}
          <i></i>
        </div>
      {/each}
    </div>
    <div class="tray">
      <svg width="14" height="9" viewBox="0 0 14 9"><path d="M1 7.500l6-6 6 6" fill="none" stroke="#fff" stroke-width="1.5" /></svg>
      <svg width="22" height="18" viewBox="0 0 22 18" fill="none" stroke="#fff" stroke-width="1.6"><path d="M1 7q10-9.500 20 0M4 10.300q7-6.600 14 0M7 13.300q4-3.600 8 0" /><circle cx="11" cy="15.2" r="1.7" fill="#fff" stroke="none" /></svg>
      <svg width="22" height="18" viewBox="0 0 22 18" fill="none" stroke="#fff" stroke-width="1.4"><path d="M1 6.500h3.500L9 2.500v13l-4.500-4H1zM12 6q2 3 0 6M15 4q3.500 5 0 10M18 2q5 7 0 14" /></svg>
      <svg width="22" height="18" viewBox="0 0 22 18"><path d="M7.500 4h9q2 0 2 2v8q0 2-2 2H4q-2 0-2-2v-3" fill="none" stroke="#fff" stroke-width="1.5" /><path d="M8 6.500h7.500q1 0 1 1v5q0 1-1 1H4.500V11zM19 8h2v4h-2zM4.500 0 0 7h3l-1.500 4.500L7.500 5h-3L6 0z" fill="#fff" /></svg>
      <div class="clock"><span>9:06 PM</span><span>10/3/2025</span></div>
    </div>
  </footer>
</div>

<style>
  :global(body) { margin: 0; background: #202020; overflow: hidden; }
  .screen { width: 1920px; height: 1080px; display: flex; flex-direction: column; font-family: 'Open Sans', 'Noto Sans', sans-serif; overflow: hidden; }
  .screen :global(svg) { flex: none; display: block; overflow: visible; }
  .screen * { box-sizing: border-box; }

  /* Browser chrome */
  .browser { height: 152px; flex: none; background: #2b1e0d; color: #dccbb6; display: flex; flex-direction: column; }
  .tabstrip { height: 50px; display: flex; align-items: flex-start; padding: 8px 0 0 8px; }
  .tabsearch { width: 34px; height: 34px; border-radius: 11px; background: #493826; display: grid; place-items: center; margin-right: 9px; }
  .tab { position: relative; width: 289px; height: 42px; margin-right: 8.6px; display: flex; align-items: center; padding: 0 14px 9px 10px; font-size: 14.2px; border-radius: 12px 12px 0 0; }
  .tab .fav { width: 20px; height: 34px; margin-right: 9px; display: grid; align-items: center; }
  .tab .title { flex: 1; white-space: nowrap; padding-top: 2px; }
  .tab.active { background: #493826; color: #f1e4d3; }
  .tab.active::before, .tab.active::after { content: ''; position: absolute; bottom: 0; width: 12px; height: 12px; }
  .tab.active::before { right: 100%; background: radial-gradient(circle at 0 0, transparent 11.5px, #493826 12px); }
  .tab.active::after { left: 100%; background: radial-gradient(circle at 100% 0, transparent 11.5px, #493826 12px); }
  .tab.ruled::after { content: ''; position: absolute; right: -4px; top: 7px; width: 2px; height: 20px; background: #493826; }
  .t0 { letter-spacing: -.02px; }
  .t1 { letter-spacing: -.18px; }
  .t2 { letter-spacing: .05px; }
  .t3 { letter-spacing: -.02px; }
  .plus { margin: 10px 0 0 9.5px; }
  .winctl { margin: 10px 22px 0 auto; display: flex; gap: 43px; }

  .toolbar { height: 58px; background: #493826; border-radius: 10px 10px 0 0; display: flex; align-items: center; }
  .nav { display: flex; gap: 27px; padding-left: 18px; width: 151px; }
  .omnibox { width: 1213px; height: 42px; border-radius: 21px; background: #2f2214; display: flex; align-items: center; padding: 0 19px 0 6px; }
  .chip { height: 30px; width: 117px; border-radius: 15px; background: #493826; color: #efa79e; font-size: 14.6px; display: flex; align-items: center; gap: 7px; padding-left: 9px; font-weight: 500; white-space: nowrap; }
  .chip span { margin-top: -1px; }
  .url { flex: 1; padding-left: 11px; font-size: 16.4px; color: #f4e8d9; letter-spacing: .05px; padding-bottom: 2px; }
  .url s { color: #e89c92; }
  .url .dim { color: #d2c1ab; }
  .extensions { flex: 1; display: grid; grid-template-columns: repeat(7, 45.1px) 19.7px 49px 19px 49px 40px 51px; margin-left: 11px; align-items: center; justify-items: center; }
  .bar { width: 2px; height: 20px; background: #66533e; }
  .avatar { width: 25px; height: 25px; border-radius: 50%; background: #718b9b; color: #eef2f4; font-size: 12px; display: grid; place-items: center; }
  .fq { font: italic 700 14px 'Liberation Serif', serif; fill: #fff; text-anchor: middle; }
  .bookmarks { height: 44px; background: #493826; border-bottom: 1px solid #55483b; display: flex; align-items: center; padding: 0 18px 10px 16px; }
  .bookmarks .bar { margin-left: auto; margin-right: 20px; height: 19px; }
  .bookmarks span { font-size: 14.2px; margin-left: 11px; color: #ddccb7; }

  /* Page */
  .page { height: 868px; display: flex; background: #fff; overflow: hidden; }
  .sidebar { position: relative; z-index: 1; width: 325px; flex: none; background: #eae9f1; overflow: hidden; }
  .brand { height: 97px; background: #342f8f; display: flex; align-items: center; padding: 3px 23px 0 28px; }
  .wordmark { display: flex; flex-direction: column; margin-left: 9px; width: 190px; }
  .wordmark b { font: 300 31.5px/34px Inter, 'Liberation Sans', sans-serif; color: #a9c2ee; letter-spacing: -.8px; margin-top: 9px; }
  .wordmark small { font: 500 8px/8px Inter, sans-serif; color: #a3a9dd; letter-spacing: .9px; margin: 1px 0 0 29px; }
  .fold { margin-left: auto; }
  h2 { margin: 0; font-size: 15px; font-weight: 600; line-height: 20px; color: #000; padding: 15px 0 0 25px; letter-spacing: -.25px; }
  nav a { display: flex; align-items: center; color: #929aa8; font-size: 16.25px; padding-left: 31px; padding-right: 41.5px; }
  .short { padding-top: 10px; }
  .short a { height: 45px; }
  .tall a { height: 47.5px; }
  .short .strong { color: #4a8340; font-weight: 600; letter-spacing: -.1px; }
  .ico { width: 40px; margin-right: 5px; display: grid; place-items: center; }
  .fa { fill: currentColor; }
  .ico .fa { color: #6a66a3; }
  .land { fill: #eae9f1; }
  .more { margin-left: auto; }
  hr { margin: 2px 24px 0 25px; border: 0; height: 1px; background: #e2e3ee; }
  h2.second { padding-top: 9px; padding-bottom: 10.4px; }

  main { flex: 1; min-width: 0; }
  .topbar { height: 97px; background: linear-gradient(135deg, #3d39a5 70%, #5aaafa 100%); margin-left: -325px; padding: 18.6px 24.6px 0 0; display: flex; justify-content: flex-end; gap: 6.25px; }
  .topbar button { width: 56.25px; height: 56.25px; border: 2px solid rgba(255, 255, 255, .24); border-radius: 4px; background: none; display: grid; place-items: center; color: #e3ebfb; padding: 2px 0 0; }
  .you, .tube { font: 700 13px 'Liberation Sans', sans-serif; text-anchor: middle; }
  .you { fill: #e3ebfb; }
  .tube { fill: #4a79d8; }

  .alert { margin: 25px 38px 0 37.5px; height: 51px; border-radius: 4px; line-height: 51px; padding-left: 12.5px; font-size: 16.25px; white-space: nowrap; }
  .alert b { font-weight: 600; letter-spacing: -.28px; }
  .alert.info { background: #e0e7ef; color: #7b7f86; }
  .alert.info b { color: #6d7177; }
  .alert.warn { background: #faeecb; color: #7d6a3a; }
  .alert.warn b { color: #655128; }

  .panel { margin: 25px 38px 0 37.5px; height: 600px; padding-top: 25px; background: linear-gradient(135deg, #f6f8fb, #c3cfe2) 0 0 / 100% 4000px; display: flex; flex-direction: column; align-items: center; }
  .hero { position: relative; width: 1125px; height: 184px; flex: none; border-radius: 25px; background: linear-gradient(135deg, #6c7fe6, #6f4b9b); box-shadow: 0 25px 50px rgba(130, 136, 240, .24); text-align: center; color: #fff; margin-left: .6px; }
  .hero::before { content: ''; position: absolute; inset: 0; border-radius: 25px; background: radial-gradient(circle at 100% 0, rgba(255, 255, 255, .13) 62px, transparent 62.8px), radial-gradient(circle at 12.5px 171px, rgba(255, 255, 255, .12) 49.5px, transparent 50.3px); }
  h1 { margin: 0; padding-top: 41px; font: 400 39.5px/56px Lato, sans-serif; letter-spacing: -4px; text-indent: -4px; text-shadow: 0 2px 5px rgba(0, 0, 0, .08); }
  .hero p { margin: 13px 0 0; font-size: 15px; line-height: 24px; color: #ebe7f8; }
  .stats { width: 1425.5px; margin: 50px 0 0 .6px; display: grid; grid-template-columns: repeat(4, 333px); justify-content: space-between; flex: none; }
  .card { position: relative; height: 200px; border-radius: 20px; color: #fff; display: flex; padding: 37px 0 0 39.5px; box-shadow: 0 12px 40px rgba(0, 0, 0, .1); }
  .card::before { content: ''; position: absolute; inset: 0; border-radius: 20px; background: radial-gradient(circle at 308px 25px, rgba(255, 255, 255, .13) 49.6px, transparent 50.4px), radial-gradient(circle at 25px 175px, rgba(255, 255, 255, .07) 74.6px, transparent 75.4px); }
  .indigo { background: linear-gradient(135deg, #525ca6, #717bd8); }
  .blue { background: linear-gradient(135deg, #82b5fd, #6775ea 50%, #4e43da); }
  .pink { background: linear-gradient(135deg, #ea709b, #cd3360); }
  .orange { background: linear-gradient(135deg, #f0ad44, #e7734d); }
  .pic { width: 46px; height: 44px; padding-top: 14px; margin-right: 37px; opacity: .92; }
  .figure { display: flex; flex-direction: column; position: relative; }
  .figure strong { font-weight: 600; font-size: 43px; line-height: 42px; }
  .figure span { font-weight: 600; font-size: 14.5px; line-height: 20px; margin-top: 8px; white-space: nowrap; }
  .at { font: 400 17px 'Liberation Sans', sans-serif; fill: #f4eefa; text-anchor: middle; }
  .sheet { width: 1450px; height: 200px; flex: none; margin-top: 63px; border-radius: 25px; background: #fcfdfe; padding-top: 50px; }
  .switch { width: 511px; height: 60px; margin: 0 auto; border-radius: 20px; background: linear-gradient(90deg, #5560ad, #6e77da); padding: 13px 15px; box-shadow: 0 0 30px rgba(80, 80, 120, .08); }
  .knob { width: 145px; height: 50px; border-radius: 14px; background: #fff; }

  .scrollbar { width: 19px; flex: none; background: #2c2c2c; display: flex; flex-direction: column; align-items: center; padding: 5px 0 5px; }
  .thumb { width: 11px; height: 175px; border-radius: 6px; background: #9f9f9f; margin: 8px 0 auto; }

  /* Taskbar */
  .taskbar { height: 60px; flex: none; background: linear-gradient(90deg, #202020, #202020 10%, #2b2b2b 30%, #2b2b2b 82%, #222 93%); border-top: 1px solid #3a3a3a; display: flex; align-items: flex-start; justify-content: flex-end; }
  .apps { display: flex; width: 1056.5px; padding-top: 4px; gap: 5.1px; }
  .app { position: relative; width: 50px; height: 50px; border-radius: 5px; display: grid; justify-items: center; padding-top: 10px; flex: none; }
  .app i { position: absolute; bottom: 1px; height: 4px; width: 8px; border-radius: 2px; background: #9a9a9a; display: none; }
  .app.dot i { display: block; }
  .app.bar { background: #353535; border: 1px solid #414141; padding-top: 9px; height: 50px; width: 50px; }
  .app.bar i { display: block; bottom: 0; width: 20px; background: #54bdf2; }
  .badge { position: absolute; right: 3px; top: 3px; width: 20px; height: 20px; border-radius: 50%; background: #718b9b; color: #dfe6ea; font-size: 12px; line-height: 20px; text-align: center; }
  .tray { display: flex; align-items: center; height: 57px; padding-right: 24px; width: 231px; }
  .tray svg:nth-child(2) { margin-left: 22px; }
  .tray svg:nth-child(3) { margin-left: 8px; }
  .tray svg:nth-child(4) { margin-left: 9px; }
  .clock { margin-left: auto; display: flex; flex-direction: column; text-align: right; color: #fff; font-size: 14.8px; line-height: 20px; letter-spacing: -.05px; }
</style>
